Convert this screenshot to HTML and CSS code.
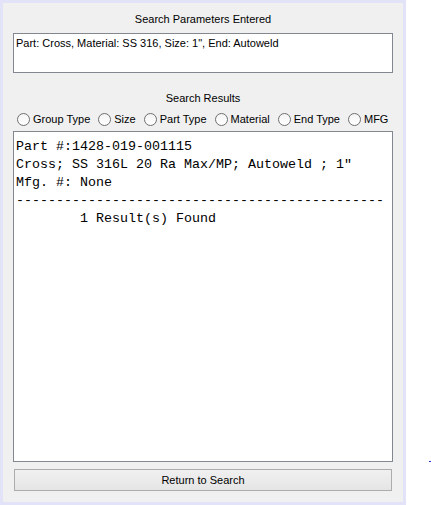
FILE: index.html
```html
<!DOCTYPE html>
<html>
<head>
<meta charset="utf-8">
<link rel="stylesheet" href="styles.css">
</head>
<body>
<div class="frame">
  <div class="panel">
    <div class="caption cap1">Search Parameters Entered</div>
    <div class="params">Part: Cross, Material: SS 316, Size: 1", End: Autoweld</div>
    <div class="caption cap2">Search Results</div>
    <div class="radios">
      <label class="radio"><span class="dot"></span>Group Type</label>
      <label class="radio"><span class="dot"></span>Size</label>
      <label class="radio"><span class="dot"></span>Part Type</label>
      <label class="radio"><span class="dot"></span>Material</label>
      <label class="radio"><span class="dot"></span>End Type</label>
      <label class="radio"><span class="dot"></span>MFG</label>
    </div>
    <pre class="results">Part #:1428-019-001115
Cross; SS 316L 20 Ra Max/MP; Autoweld ; 1"
Mfg. #: None
----------------------------------------------
        1 Result(s) Found</pre>
    <div class="button">Return to Search</div>
  </div>
</div>
<span class="speck"></span>
</body>
</html>
```
FILE: styles.css
```css
html, body {
  margin: 0;
  padding: 0;
  background: #ffffff;
  width: 431px;
  height: 505px;
  overflow: hidden;
  position: relative;
}
.frame {
  width: 400px;
  height: 499px;
  padding: 3px;
  background: #e2e2f9;
}
.panel {
  background: #f0f0f0;
  height: 499px;
  display: flex;
  flex-direction: column;
  align-items: stretch;
  padding: 0 10px 0 10px;
  box-sizing: border-box;
  font-family: "Liberation Sans", Arial, sans-serif;
  font-size: 11px;
  color: #000;
}
.caption {
  text-align: center;
  line-height: 13px;
}
.cap1 { margin-top: 10px; }
.params {
  margin-top: 7px;
  border: 1px solid #828790;
  background: #fff;
  padding: 3px 2px;
  box-sizing: border-box;
  height: 40px;
  line-height: 13px;
}
.cap2 { margin-top: 19px; }
.radios {
  display: flex;
  margin-top: 7px;
  height: 14px;
  align-items: center;
  padding-left: 4px;
}
.radio {
  display: flex;
  align-items: center;
  margin-right: 8px;
  white-space: nowrap;
}
.dot {
  width: 11px;
  height: 11px;
  border: 1px solid #6f6f6f;
  border-radius: 50%;
  background: linear-gradient(#f4f4f4, #ffffff);
  margin-right: 3px;
}
.results {
  margin: 5px 0 0 0;
  height: 331px;
  box-sizing: border-box;
  border: 1px solid #828790;
  background: #fff;
  padding: 6px 0 0 2px;
  font-family: "Liberation Mono", "Courier New", monospace;
  font-size: 13.33px;
  line-height: 18px;
  color: #000;
  overflow: hidden;
}
.button {
  margin: 7px 1px 0 1px;
  height: 22px;
  box-sizing: border-box;
  border: 1px solid #acacac;
  background: linear-gradient(#f0f0f0, #e5e5e5);
  text-align: center;
  line-height: 20px;
}
.speck {
  position: absolute;
  left: 429px;
  top: 461px;
  width: 2px;
  height: 1px;
  background: #2a2ad8;
}
```
